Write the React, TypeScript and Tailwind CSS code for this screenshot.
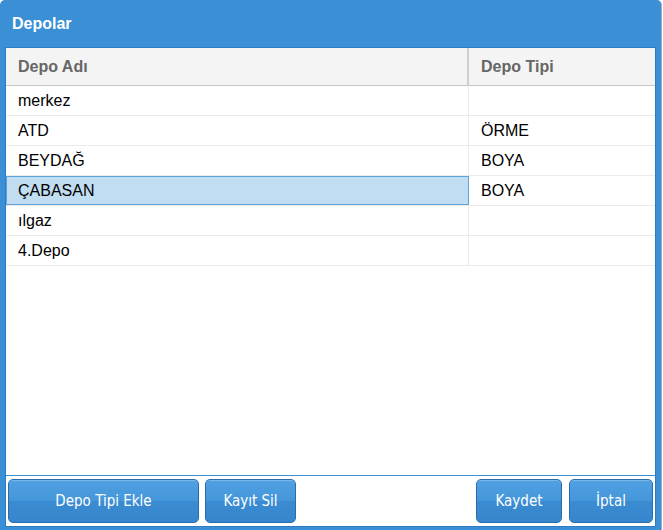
import React, { useState } from 'react';

interface Depo {
  ad: string;
  tip: string;
}

const depolar: Depo[] = [
  { ad: 'merkez', tip: '' },
  { ad: 'ATD', tip: 'ÖRME' },
  { ad: 'BEYDAĞ', tip: 'BOYA' },
  { ad: 'ÇABASAN', tip: 'BOYA' },
  { ad: 'ılgaz', tip: '' },
  { ad: '4.Depo', tip: '' },
];

const btn =
  "h-[44px] rounded-[5px] border border-[#2b6dab] bg-[linear-gradient(to_bottom,#4fa1e2_0%,#4496da_50%,#3a8bd1_51%,#3786cd_100%)] text-white text-[15px] font-['DejaVu_Sans_Condensed','Liberation_Sans_Narrow',sans-serif] shadow-[inset_0_1px_0_rgba(255,255,255,0.25)]";

export default function App() {
  const [selected, setSelected] = useState(3);

  return (
    <div className="w-[663px] h-[530px] bg-white font-['Liberation_Sans',Arial,sans-serif]">
      <div className="w-[662px] h-[530px] flex flex-col bg-[#3a8fd5] rounded-t-[5px] border-r border-[#9fb3c4] pl-[5px] pr-[5px]">
        {/* Title */}
        <div className="h-[47px] flex items-center pl-[7px] text-white font-bold text-[16px]">
          Depolar
        </div>

        {/* Body */}
        <div className="h-[480px] flex flex-col bg-white border border-[#2b7cc3]">
          <div className="flex-1 flex flex-col border-b border-[#3a8fd5]">
            {/* Header */}
            <div className="flex h-[38px] bg-[#f4f4f4] border-b border-[#c6c6c6] text-[#666666] font-bold text-[16px]">
              <div className="w-[463px] flex items-center pl-3 border-r-2 border-[#cfcfcf]">Depo Adı</div>
              <div className="flex-1 flex items-center pl-3">Depo Tipi</div>
            </div>

            {/* Rows */}
            {depolar.map((d, i) => (
              <div
                key={d.ad}
                onClick={() => setSelected(i)}
                className="flex h-[30px] border-b border-[#ebebeb] text-[16px] text-black cursor-default"
              >
                <div
                  className={
                    i === selected
                      ? 'w-[463px] flex items-center pl-[11px] bg-[#c1ddf2] border border-[#5fa3dc]'
                      : 'w-[463px] flex items-center pl-3 border-r border-[#ebebeb]'
                  }
                >
                  {d.ad}
                </div>
                <div className="flex-1 flex items-center pl-3">{d.tip}</div>
              </div>
            ))}
          </div>

          {/* Footer */}
          <div className="h-[50px] flex items-start pt-[3px] px-[2px]">
            <button className={`${btn} w-[191px]`}>Depo Tipi Ekle</button>
            <button className={`${btn} w-[91px] ml-[6px]`}>Kayıt Sil</button>
            <div className="flex-1" />
            <button className={`${btn} w-[86px]`}>Kaydet</button>
            <button className={`${btn} w-[84px] ml-[7px]`}>İptal</button>
          </div>
        </div>
      </div>
    </div>
  );
}
